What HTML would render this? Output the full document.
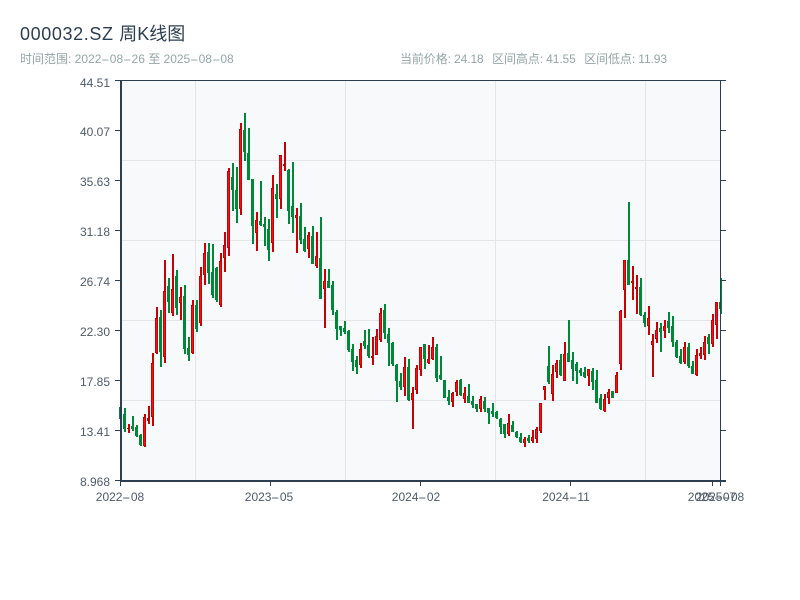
<!DOCTYPE html>
<html lang="zh"><head><meta charset="utf-8"><title>000032.SZ 周K线图</title>
<style>
html,body{margin:0;padding:0;background:#fff}
body{width:800px;height:600px;position:relative;overflow:hidden;font-family:"Liberation Sans","Noto Sans CJK SC",sans-serif}
div.t{position:absolute;white-space:nowrap}
.h{display:inline-block;width:.7em;font-style:normal;text-align:center;transform:scaleX(2.1)}
.ti{left:20px;top:23px;font-size:18px;line-height:22px;color:#2c3e50}
.ti b{font-weight:normal;letter-spacing:.62px}
.s{font-size:12px;line-height:16px;color:#95a5a6;top:51px}
.g{margin-left:8.5px}
.y{right:690px;font-size:12px;line-height:14px;color:#4f5b69;text-align:right}
.x{font-size:12px;line-height:14px;color:#4f5b69;top:490px;width:60px;text-align:center}
svg{position:absolute;left:0;top:0}
</style></head><body>
<svg width="800" height="600" viewBox="0 0 800 600" shape-rendering="crispEdges" fill="none">
<rect x="120" y="80" width="600" height="400" fill="#f8f9fa"/>
<path d="M195.5 80V480M345.5 80V480M495.5 80V480M645.5 80V480M120 160.5H720M120 240.5H720M120 320.5H720M120 400.5H720" stroke="#e3e5ea" stroke-width="1"/>
<path stroke="#00873a" stroke-width="2" d="M121 407V430M125 408V432M133 416V431M137 425V437M141 434V446M161 310V367M169 278V313M177 270V315M185 285V354M189 337V361M197 300V332M209 243V284M213 244V298M217 267V302M233 163V211M237 167V223M245 113V161M249 128V180M253 179V244M261 181V226M265 217V246M269 219V261M277 184V218M289 169V224M293 162V233M301 203V244M305 227V252M313 226V264M321 217V299M329 269V288M333 281V315M337 310V340M341 326V336M345 321V334M349 330V352M353 344V371M357 356V374M365 330V349M369 329V358M385 304V339M389 328V366M393 342V366M397 364V402M401 373V390M409 359V401M425 344V369M437 344V382M441 356V380M445 380V398M449 390V405M461 379V396M469 384V403M473 396V408M477 404V412M485 397V412M489 408V424M493 403V417M497 411V419M501 418V434M505 424V438M513 421V432M517 431V438M521 433V443M529 435V443M549 346V384M561 354V376M569 320V362M573 352V381M577 362V384M581 368V376M585 367V378M593 368V390M597 370V403M601 394V410M613 391V398M629 202V285M641 278V316M645 312V327M661 323V352M669 312V333M673 316V347M677 340V358M681 349V364M689 343V368M693 361V374M709 334V354M721 278V314"/>
<path stroke="#00873a" stroke-width="3" d="M120.5 407V419M124.5 414V429M132.5 426V429M136.5 427V436M140.5 435V445M160.5 317V352M168.5 286V302M176.5 276V308M184.5 296V349M188.5 348V355M196.5 305V329M208.5 252V273M212.5 272V295M216.5 268V300M232.5 177V190M236.5 190V209M244.5 130V152M248.5 153V180M252.5 179V226M260.5 221V225M264.5 224V227M268.5 229V250M276.5 194V199M288.5 170V211M292.5 206V217M300.5 216V240M304.5 239V251M312.5 236V264M320.5 258V299M328.5 281V288M332.5 285V310M336.5 312V329M340.5 326V330M344.5 328V332M348.5 331V350M352.5 349V362M356.5 360V367M364.5 341V346M368.5 345V356M384.5 310V333M388.5 334V343M392.5 343V364M396.5 365V381M400.5 381V387M408.5 367V400M424.5 344V359M436.5 347V378M440.5 375V379M444.5 380V398M448.5 397V401M460.5 380V395M468.5 396V403M472.5 401V405M476.5 404V409M484.5 401V409M488.5 408V413M492.5 411V414M496.5 412V418M500.5 419V427M504.5 424V434M512.5 425V432M516.5 432V437M520.5 437V442M528.5 438V441M548.5 366V382M560.5 360V375M568.5 353V362M572.5 360V369M576.5 364V371M580.5 370V373M584.5 372V377M592.5 371V382M596.5 380V403M600.5 398V409M612.5 391V398M628.5 260V285M640.5 287V315M644.5 315V323M660.5 328V332M668.5 321V328M672.5 326V342M676.5 342V357M680.5 356V363M688.5 347V366M692.5 366V374M708.5 337V344M720.5 302V309"/>
<path stroke="#c80008" stroke-width="2" d="M129 424V433M145 414V447M149 406V424M153 353V426M157 307V354M165 260V363M173 254V316M181 287V320M193 300V354M201 267V326M205 243V285M221 253V307M225 232V272M229 168V256M241 123V215M257 212V251M273 175V252M281 155V209M285 142V171M297 208V253M309 232V258M317 232V268M325 269V328M361 343V368M373 337V365M377 329V355M381 308V342M405 357V396M413 387V429M417 365V394M421 347V376M429 345V364M433 337V360M453 392V407M457 380V396M465 387V403M481 396V412M509 414V436M525 437V447M533 430V443M537 427V443M541 403V433M545 386V400M553 365V401M557 360V378M565 342V381M589 369V386M605 394V412M609 389V404M617 372V393M621 310V370M625 260V318M633 266V300M637 275V314M649 306V335M653 334V377M657 322V343M665 320V338M685 342V364M697 349V376M701 347V359M705 336V360M713 314V347M717 302V339"/>
<path stroke="#c80008" stroke-width="3" d="M128.5 428V429M144.5 417V446M148.5 418V421M152.5 363V417M156.5 318V353M164.5 291V357M172.5 289V313M180.5 297V303M192.5 305V353M200.5 276V323M204.5 253V275M220.5 261V305M224.5 245V258M228.5 171V248M240.5 129V209M256.5 220V233M272.5 188V243M280.5 155V199M284.5 164V166M296.5 215V218M308.5 235V249M316.5 256V266M324.5 281V289M360.5 349V365M372.5 356V358M376.5 336V355M380.5 313V340M404.5 367V387M412.5 393V400M416.5 368V390M420.5 347V370M428.5 359V363M432.5 347V359M452.5 393V402M456.5 382V392M464.5 393V399M480.5 399V409M508.5 423V434M524.5 439V443M532.5 437V441M536.5 429V439M540.5 403V431M544.5 386V390M552.5 374V394M556.5 363V372M564.5 354V381M588.5 369V376M604.5 399V411M608.5 392V398M616.5 375V393M620.5 311V364M624.5 260V290M632.5 281V283M636.5 287V289M648.5 318V326M652.5 341V345M656.5 330V339M664.5 326V331M684.5 347V362M696.5 355V375M700.5 353V356M704.5 342V355M712.5 320V344M716.5 302V325"/>
<path stroke="#f5101f" stroke-width="1" d="M144.5 418V445M152.5 364V416M156.5 319V352M164.5 292V356M172.5 290V312M180.5 298V302M192.5 306V352M200.5 277V322M204.5 254V274M220.5 262V304M224.5 246V257M228.5 172V247M240.5 130V208M256.5 221V232M272.5 189V242M280.5 156V198M296.5 216V217M308.5 236V248M316.5 257V265M324.5 282V288M360.5 350V364M376.5 337V354M380.5 314V339M404.5 368V386M412.5 394V399M416.5 369V389M420.5 348V369M428.5 360V362M432.5 348V358M452.5 394V401M456.5 383V391M464.5 394V398M480.5 400V408M508.5 424V433M524.5 440V442M532.5 438V440M536.5 430V438M540.5 404V430M544.5 387V389M552.5 375V393M556.5 364V371M564.5 355V380M588.5 370V375M604.5 400V410M608.5 393V397M616.5 376V392M620.5 312V363M624.5 261V289M648.5 319V325M652.5 342V344M656.5 331V338M664.5 327V330M684.5 348V361M696.5 356V374M700.5 354V355M704.5 343V354M712.5 321V343M716.5 303V324"/>
<path stroke="#2c3e50" stroke-width="2" d="M121 80V482M120 481H726"/>
<path stroke="#2c3e50" stroke-width="1" d="M120 80.5H726M720.5 80V480M115 80.5H120M115 130.5H120M115 180.5H120M115 230.5H120M115 280.5H120M115 330.5H120M115 380.5H120M115 430.5H120M115 480.5H120M720 130.5H726M720 180.5H726M720 230.5H726M720 280.5H726M720 330.5H726M720 380.5H726M720 430.5H726M120.5 482V486M270.5 482V486M420.5 482V486M570.5 482V486M712.5 482V486M720.5 482V486"/>
</svg>
<div class="t ti"><b>000032.SZ </b>周K线图</div>
<div class="t s" style="left:20px">时间范围: 2022<i class="h">-</i>08<i class="h">-</i>26 至 2025<i class="h">-</i>08<i class="h">-</i>08</div>
<div class="t s" style="left:400px;letter-spacing:-.1px">当前价格: 24.18<span class="g">区间高点: 41.55</span><span class="g">区间低点: 11.93</span></div>
<div class="t y" style="top:76px">44.51</div>
<div class="t y" style="top:125px">40.07</div>
<div class="t y" style="top:175px">35.63</div>
<div class="t y" style="top:225px">31.18</div>
<div class="t y" style="top:275px">26.74</div>
<div class="t y" style="top:325px">22.30</div>
<div class="t y" style="top:375px">17.85</div>
<div class="t y" style="top:425px">13.41</div>
<div class="t y" style="top:475px">8.968</div>
<div class="t x" style="left:90px">2022<i class="h">-</i>08</div>
<div class="t x" style="left:239px">2023<i class="h">-</i>05</div>
<div class="t x" style="left:386px">2024<i class="h">-</i>02</div>
<div class="t x" style="left:536px">2024<i class="h">-</i>11</div>
<div class="t x" style="left:682px">2025<i class="h">-</i>07</div>
<div class="t x" style="left:690px">2025<i class="h">-</i>08</div>
</body></html>
